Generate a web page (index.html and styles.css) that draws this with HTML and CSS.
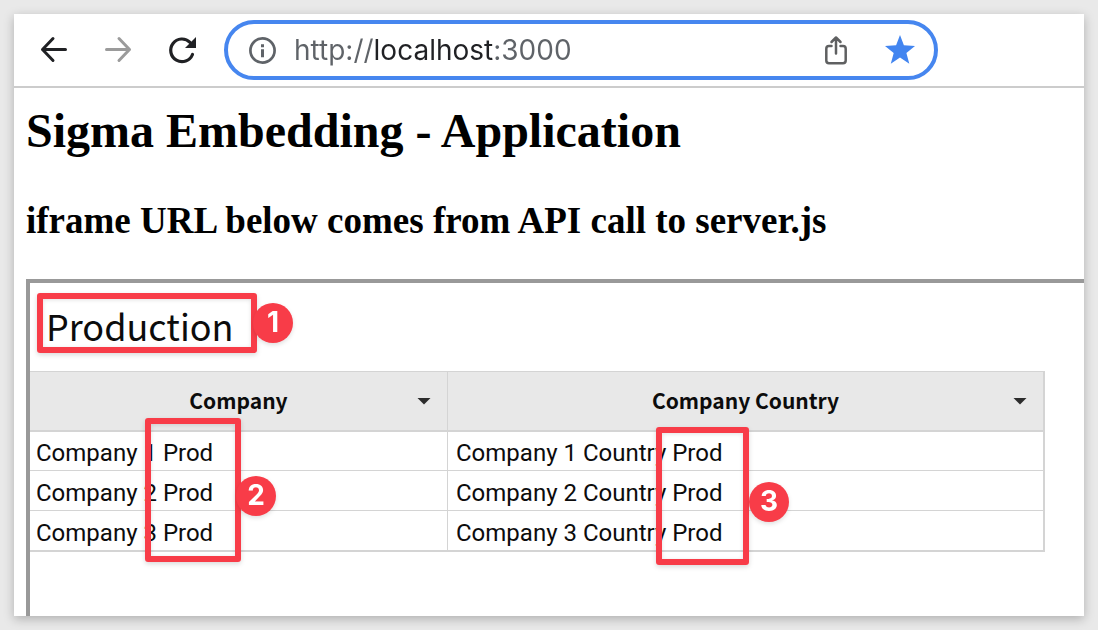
FILE: index.html
```html
<!DOCTYPE html>
<html lang="en">
<head>
<meta charset="utf-8">
<title>Sigma Embedding</title>
<link rel="stylesheet" href="styles.css">
</head>
<body>
<div class="window">
  <header class="toolbar">
    <button class="icon-button" type="button" aria-label="Back">
      <svg width="32" height="32" viewBox="0 0 32 32" fill="none" stroke="#202124" stroke-width="3" stroke-linecap="round" stroke-linejoin="round"><path d="M27.500 15.500H4.500M15 4.500L4.500 15.500L15 26.500"/></svg>
    </button>
    <button class="icon-button" type="button" aria-label="Forward">
      <svg width="32" height="32" viewBox="0 0 32 32" fill="none" stroke="#9b9b9b" stroke-width="3" stroke-linecap="round" stroke-linejoin="round"><path d="M4.500 15.500H27.500M17 4.500L27.500 15.500L17 26.500"/></svg>
    </button>
    <button class="icon-button" type="button" aria-label="Reload">
      <svg width="32" height="32" viewBox="0 0 32 32"><path d="M26.500 20.500A11.300 11.300 0 1 1 24 8.300" fill="none" stroke="#202124" stroke-width="3.200" stroke-linecap="round"/><path d="M30 3V14H19Z" fill="#202124"/></svg>
    </button>
    <div class="address">
      <svg class="info" width="28" height="28" viewBox="0 0 28 28"><circle cx="14.500" cy="14.500" r="12.100" fill="none" stroke="#5f6368" stroke-width="2.700"/><path d="M13 8.300h3v2.900h-3zM13 13.300h3v7.900h-3z" fill="#5f6368"/></svg>
      <input class="url" type="text" aria-label="Address" value="http://localhost:3000">
      <button class="icon-button" type="button" aria-label="Share">
        <svg width="32" height="32" viewBox="0 0 32 32" fill="none" stroke="#5f6061" stroke-width="2.500" stroke-linecap="round" stroke-linejoin="round"><path d="M11.500 12H9Q6.300 12 6.300 14.700V26.600Q6.300 29.300 9 29.300H23Q25.700 29.300 25.700 26.600V14.700Q25.700 12 23 12H20.500M16 19.500V4M11.500 8L16 3.500L20.500 8"/></svg>
      </button>
      <button class="icon-button" type="button" aria-label="Bookmark">
        <svg width="32" height="32" viewBox="0 0 32 32"><path d="M16 1L19.900 11.300L31 11.900L22.400 18.900L25.300 29.700L16 23.600L6.800 29.700L9.700 18.900L1 11.900L12.100 11.300Z" fill="#4285f0"/></svg>
      </button>
    </div>
  </header>
  <main class="page">
    <h1 class="title">Sigma Embedding - Application</h1>
    <h2 class="subtitle">iframe URL below comes from API call to server.js</h2>
    <section class="embed">
      <div class="heading">
        <h3 class="heading-text">Production</h3>
        <span class="mark mark-title"></span><span class="badge badge-title">1</span>
      </div>
      <table class="grid">
        <thead>
          <tr>
            <th class="col-company" scope="col">
              <div class="head"><span class="head-label">Company</span><button class="caret" type="button" aria-label="Company options"></button></div>
              <span class="mark mark-company"></span><span class="badge badge-company">2</span>
            </th>
            <th scope="col">
              <div class="head"><span class="head-label">Company Country</span><button class="caret" type="button" aria-label="Company Country options"></button></div>
              <span class="mark mark-country"></span><span class="badge badge-country">3</span>
            </th>
          </tr>
        </thead>
        <tbody>
          <tr><td>Company 1 Prod</td><td>Company 1 Country Prod</td></tr>
          <tr><td>Company 2 Prod</td><td>Company 2 Country Prod</td></tr>
          <tr><td>Company 3 Prod</td><td>Company 3 Country Prod</td></tr>
        </tbody>
      </table>
    </section>
  </main>
</div>
</body>
</html>
```
FILE: styles.css
```css
* { box-sizing: border-box; }

body {
  margin: 0;
  padding: 14px;
  min-height: 100vh;
  display: flex;
  background: #e9e9e9;
}

button {
  padding: 0;
  border: 0;
  background: none;
}

.window {
  flex: 1;
  min-width: 0;
  display: flex;
  flex-direction: column;
  background: #fff;
  box-shadow: 0 3px 10px rgba(0, 0, 0, 0.25);
}

.toolbar {
  display: flex;
  align-items: center;
  gap: 32px;
  padding: 6px 146px 6px 24px;
  border-bottom: 2px solid #ccc;
}

.icon-button,
.icon-button svg,
.info {
  display: block;
  flex: none;
}

.address {
  flex: 1;
  min-width: 0;
  height: 60px;
  margin-left: -6px;
  display: flex;
  align-items: center;
  gap: 32px;
  padding: 0 18px 0 20px;
  border: 4px solid #4686ef;
  border-radius: 30px;
}

/* The host part of the address is darker than the scheme and the port. */
.url {
  flex: 1;
  min-width: 0;
  height: 40px;
  margin-left: -14px;
  padding: 0;
  border: 0;
  outline: 0;
  font: 28px Inter, "Liberation Sans", sans-serif;
  color: transparent;
  caret-color: #202124;
  background: linear-gradient(90deg, #5f6368 80px, #202124 80px, #202124 200px, #5f6368 200px);
  -webkit-background-clip: text;
  background-clip: text;
}

.page {
  flex: 1;
  display: flex;
  flex-direction: column;
  padding-left: 12px;
}

.title,
.subtitle {
  margin: 0;
  font-family: "Liberation Serif", serif;
  font-weight: bold;
  color: #000;
}

.title {
  padding-top: 15px;
  font-size: 48px;
  line-height: 56px;
}

.subtitle {
  padding: 40px 0 37px;
  font-size: 37px;
  line-height: 43px;
}

.embed {
  flex: 1;
  border: solid #999;
  border-width: 4px 0 0 4px;
}

.heading {
  position: relative;
  padding: 14px 0 18px 16px;
}

.heading-text {
  margin: 0;
  font: 400 36px/56px "Noto Sans CJK SC", sans-serif;
  color: #0c0c0c;
}

.grid {
  width: calc(100% - 39px);
  table-layout: fixed;
  border-collapse: separate;
  border-spacing: 0;
  border-right: 2px solid #d4d4d4;
  font: 24px/28px Roboto, sans-serif;
  color: #0c0c0c;
}

.grid th {
  position: relative;
  height: 61px;
  padding: 0 16px;
  border: solid #d4d4d4;
  border-width: 1px 0 2px;
  background: #e8e8e8;
  font: 700 21px/28px "Noto Sans CJK SC", sans-serif;
}

.grid .col-company { width: 418px; border-right-width: 1px; }

.head {
  display: grid;
  grid-template-columns: 1fr auto 1fr;
  align-items: center;
}

.head-label {
  grid-column: 2;
  padding-bottom: 2px;
}

.caret {
  justify-self: end;
  width: 14px;
  height: 7px;
  background: #2c2c2c;
  clip-path: polygon(0 0, 100% 0, 50% 100%);
}

.grid td {
  height: 40px;
  padding: 4px 0 0 8px;
  border-bottom: 1px solid #d4d4d4;
}

.grid td:first-child {
  padding-left: 6px;
  border-right: 1px solid #d4d4d4;
}

.grid tr:first-child td { height: 39px; }
.grid tr:last-child td { height: 41px; border-bottom-width: 2px; }

/* Callouts laid over the embedded content. */
.mark {
  position: absolute;
  z-index: 1;
  border: 6px solid #f83c48;
  border-radius: 3px;
  box-shadow: 0 2px 5px rgba(0, 0, 0, 0.15), inset 0 1px 4px rgba(0, 0, 0, 0.12);
}

.badge {
  position: absolute;
  z-index: 2;
  width: 40px;
  height: 40px;
  border-radius: 50%;
  background: #f83c48;
  color: #fff;
  font: 700 28px/38px Inter, sans-serif;
  text-align: center;
  filter: drop-shadow(0 2px 2px rgba(0, 0, 0, 0.12));
}

.mark-title { left: 7px; top: 10px; width: 220px; height: 60px; }
.badge-title { left: 223px; top: 20px; }
.mark-company { left: 115px; top: 46px; width: 96px; height: 144px; }
.badge-company { left: 206px; top: 104px; }
.mark-country { left: 208px; top: 55px; width: 93px; height: 138px; }
.badge-country { left: 301px; top: 110px; }
```
